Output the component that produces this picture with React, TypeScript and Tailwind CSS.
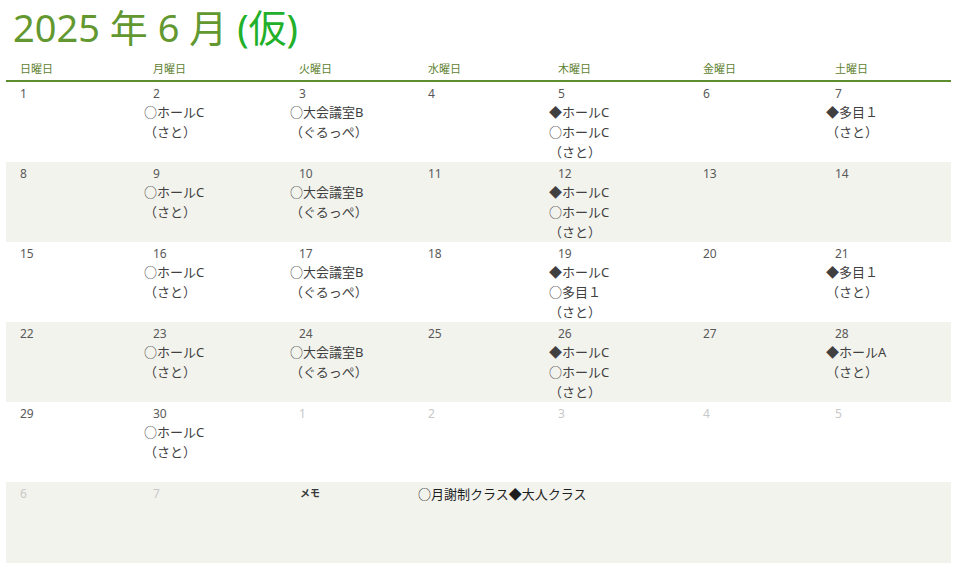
const cols = "grid grid-cols-[133px_146px_129px_130px_145px_132px_130px]"
const font = { fontFamily: '"Noto Sans", "Noto Sans CJK JP", sans-serif' }

type Day = { n: number; muted?: boolean; events?: string[] }

const weeks: Day[][] = [
  [
    { n: 1 },
    { n: 2, events: ["○ホールC", "（さと）"] },
    { n: 3, events: ["○大会議室B", "（ぐるっぺ）"] },
    { n: 4 },
    { n: 5, events: ["◆ホールC", "○ホールC", "（さと）"] },
    { n: 6 },
    { n: 7, events: ["◆多目１", "（さと）"] },
  ],
  [
    { n: 8 },
    { n: 9, events: ["○ホールC", "（さと）"] },
    { n: 10, events: ["○大会議室B", "（ぐるっぺ）"] },
    { n: 11 },
    { n: 12, events: ["◆ホールC", "○ホールC", "（さと）"] },
    { n: 13 },
    { n: 14 },
  ],
  [
    { n: 15 },
    { n: 16, events: ["○ホールC", "（さと）"] },
    { n: 17, events: ["○大会議室B", "（ぐるっぺ）"] },
    { n: 18 },
    { n: 19, events: ["◆ホールC", "○多目１", "（さと）"] },
    { n: 20 },
    { n: 21, events: ["◆多目１", "（さと）"] },
  ],
  [
    { n: 22 },
    { n: 23, events: ["○ホールC", "（さと）"] },
    { n: 24, events: ["○大会議室B", "（ぐるっぺ）"] },
    { n: 25 },
    { n: 26, events: ["◆ホールC", "○ホールC", "（さと）"] },
    { n: 27 },
    { n: 28, events: ["◆ホールA", "（さと）"] },
  ],
  [
    { n: 29 },
    { n: 30, events: ["○ホールC", "（さと）"] },
    { n: 1, muted: true },
    { n: 2, muted: true },
    { n: 3, muted: true },
    { n: 4, muted: true },
    { n: 5, muted: true },
  ],
]

const headers = ["日曜日", "月曜日", "火曜日", "水曜日", "木曜日", "金曜日", "土曜日"]

function DayCell({ day }: { day: Day }) {
  return (
    <div className="flex flex-col">
      <div
        className={`pl-[14px] pt-[4px] text-[12px] leading-[16px] ${
          day.muted ? "text-[#c8c8c8]" : "text-[#595959]"
        }`}
      >
        {day.n}
      </div>
      {day.events?.map((e, i) => (
        <div key={i} className="pl-[5px] text-[13px] leading-[20px] text-[#404040]">
          {e}
        </div>
      ))}
    </div>
  )
}

export default function App() {
  return (
    <div className="h-[569px] w-[960px] overflow-hidden bg-white" style={font}>
      <div className="h-[58px] pl-[13px] pt-[4px] text-[38px] leading-[46px] text-[#62982f]">
        2025 年 6 月 <span className="text-[#22b02a]">(仮)</span>
      </div>

      <div className="ml-[6px] w-[945px]">
        <div className={`${cols} h-[24px] border-b-2 border-[#5d8d2e]`}>
          {headers.map((h) => (
            <div key={h} className="pl-[14px] pt-[4px] text-[11px] leading-[14px] text-[#5f8232]">
              {h}
            </div>
          ))}
        </div>

        {weeks.map((week, w) => (
          <div
            key={w}
            className={`${cols} h-[80px] ${w % 2 === 1 ? "bg-[#f3f3ee]" : "bg-white"}`}
          >
            {week.map((d, i) => (
              <DayCell key={i} day={d} />
            ))}
          </div>
        ))}

        <div className={`${cols} h-[81px] bg-[#f3f3ee]`}>
          <DayCell day={{ n: 6, muted: true }} />
          <DayCell day={{ n: 7, muted: true }} />
          <div className="pl-[15px] pt-[3px] text-[10px] font-bold leading-[16px] text-[#3a3a3a]">
            メモ
          </div>
          <div className="col-span-4 pl-[4px] pt-[4px] text-[13px] leading-[16px] text-[#1e1e1e]">
            ○月謝制クラス◆大人クラス
          </div>
        </div>
      </div>
    </div>
  )
}
